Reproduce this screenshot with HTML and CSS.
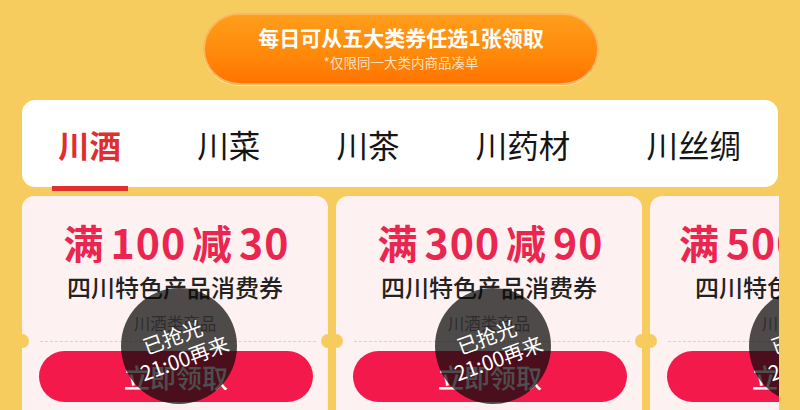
FILE: index.html
```html
<!DOCTYPE html>
<html lang="zh-CN">
<head>
<meta charset="utf-8">
<title>川货消费券</title>
<link rel="stylesheet" href="styles.css">
</head>
<body>
<div class="page">
  <div class="header">
    <div class="pill">
      <div class="pill-title">每日可从五大类券任选1张领取</div>
      <div class="pill-sub">*仅限同一大类内商品凑单</div>
    </div>
  </div>
  <div class="tabs">
    <div class="tab active">川酒</div>
    <div class="tab">川菜</div>
    <div class="tab">川茶</div>
    <div class="tab">川药材</div>
    <div class="tab">川丝绸</div>
  </div>
  <div class="coupons">
    <div class="coupon">
      <div class="amount">满<span class="num">100</span>减<span class="num">30</span></div>
      <div class="name">四川特色产品消费券</div>
      <div class="scope">川酒类商品</div>
      <div class="divider"></div>
      <div class="btn">立即领取</div>
      <div class="soldout"><div class="soldout-text"><span>已抢光</span><span>21:00再来</span></div></div>
    </div>
    <div class="coupon">
      <div class="amount">满<span class="num">300</span>减<span class="num">90</span></div>
      <div class="name">四川特色产品消费券</div>
      <div class="scope">川酒类商品</div>
      <div class="divider"></div>
      <div class="btn">立即领取</div>
      <div class="soldout"><div class="soldout-text"><span>已抢光</span><span>21:00再来</span></div></div>
    </div>
    <div class="coupon">
      <div class="amount">满<span class="num">500</span>减<span class="num">150</span></div>
      <div class="name">四川特色产品消费券</div>
      <div class="scope">川酒类商品</div>
      <div class="divider"></div>
      <div class="btn">立即领取</div>
      <div class="soldout"><div class="soldout-text"><span>已抢光</span><span>21:00再来</span></div></div>
    </div>
  </div>
</div>
</body>
</html>
```
FILE: styles.css
```css
html, body {
  margin: 0;
  padding: 0;
}
body {
  background: #f7cc5e;
  font-family: "Noto Sans CJK SC", "Noto Sans", sans-serif;
  width: 800px;
  height: 410px;
  overflow: hidden;
}
.page {
  display: flex;
  flex-direction: column;
}
.header {
  display: flex;
  justify-content: center;
  padding-top: 13px;
}
.pill {
  width: 392px;
  height: 68px;
  border-radius: 36px;
  background: linear-gradient(180deg, #ff9d1c 0%, #ff8a0a 55%, #ff7400 100%);
  border: 2px solid #fbb660;
  box-shadow: 0 1px 0 #ffe7a8;
  display: flex;
  flex-direction: column;
  align-items: center;
  justify-content: center;
  color: #fff;
  margin-left: 2px;
}
.pill-title {
  font-size: 21px;
  font-weight: 700;
  line-height: 24px;
  margin-top: -3px;
}
.pill-sub {
  font-size: 13.5px;
  line-height: 16px;
  color: rgba(255, 236, 214, 0.9);
  margin-top: 5px;
}
.tabs {
  margin: 15px 22px 0 22px;
  height: 87px;
  background: #fff;
  border-radius: 13px;
  display: flex;
  justify-content: space-between;
  align-items: center;
  padding: 0 37px 0 36px;
}
.tab {
  position: relative;
  font-size: 31.5px;
  line-height: 36px;
  color: #151515;
}
.tab.active {
  color: #e02d2d;
  font-weight: 700;
}
.tab.active::after {
  content: "";
  position: absolute;
  left: -6px;
  right: -7px;
  top: 60px;
  height: 5px;
  background: #e0302e;
}
.coupons {
  margin: 9px 21px 0 22px;
  display: flex;
  gap: 8px;
  overflow: hidden;
}
.coupon {
  position: relative;
  flex: 0 0 306px;
  height: 230px;
  background: #fdf1f1;
  border-radius: 12px;
  display: flex;
  flex-direction: column;
  align-items: center;
}
.coupon::before,
.coupon::after {
  content: "";
  position: absolute;
  top: 138px;
  width: 14px;
  height: 14px;
  border-radius: 50%;
  background: #f7cc5e;
}
.coupon::before { left: -7px; }
.coupon::after { right: -7px; }
.amount {
  margin-top: 22px;
  padding-left: 9px;
  font-size: 40px;
  font-weight: 700;
  line-height: 46px;
  color: #ea2650;
  letter-spacing: 1px;
}
.num {
  margin: 0 6px;
  font-size: 41px;
}
.name {
  margin-top: 8px;
  font-size: 24px;
  line-height: 28px;
  color: #222;
  font-weight: 500;
}
.scope {
  margin-top: 13px;
  font-size: 16.5px;
  line-height: 18px;
  color: #8a8a8a;
}
.divider {
  align-self: stretch;
  margin: 9px 12px 0 18px;
  border-top: 1.5px dashed #f1c5cb;
}
.btn {
  margin-top: 9px;
  width: 274px;
  height: 51px;
  border-radius: 26px;
  background: #f3194b;
  color: #fff;
  font-size: 26px;
  font-weight: 500;
  line-height: 51px;
  text-align: center;
  margin-left: 2px;
}
.soldout {
  position: absolute;
  left: 99px;
  top: 92px;
  width: 116px;
  height: 116px;
  border-radius: 50%;
  background: rgba(10, 10, 10, 0.72);
  display: flex;
  align-items: center;
  justify-content: center;
}
.soldout-text {
  display: flex;
  flex-direction: column;
  align-items: center;
  color: #fff;
  font-size: 20.5px;
  line-height: 24px;
  transform: rotate(-20deg);
  margin-top: 0;
  margin-left: 3px;
}
.soldout-text span:first-child {
  margin-right: 8px;
}
```
